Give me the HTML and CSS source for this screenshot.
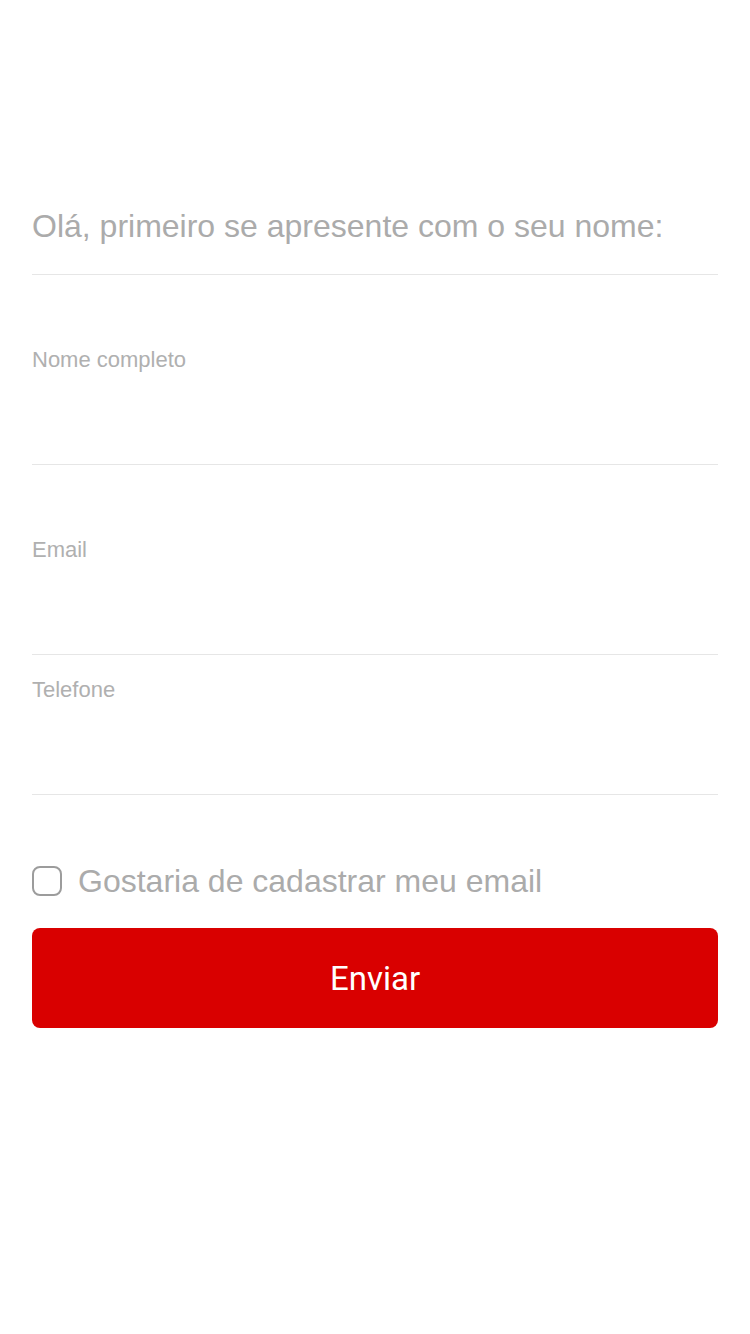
FILE: index.html
```html
<!DOCTYPE html>
<html lang="pt">
<head>
<meta charset="utf-8">
<title>Cadastro</title>
<link rel="stylesheet" href="styles.css">
</head>
<body>
<main class="page">
  <h1 class="intro">Olá, primeiro se apresente com o seu nome:</h1>
  <form class="form">
    <label class="field field--spaced">
      <span class="field-label">Nome completo</span>
      <input class="field-input" type="text">
    </label>
    <label class="field field--spaced">
      <span class="field-label">Email</span>
      <input class="field-input" type="email">
    </label>
    <label class="field">
      <span class="field-label">Telefone</span>
      <input class="field-input" type="tel">
    </label>
    <label class="check">
      <span class="check-box"></span>
      <span class="check-text">Gostaria de cadastrar meu email</span>
    </label>
    <button class="submit" type="button">Enviar</button>
  </form>
</main>
</body>
</html>
```

FILE: styles.css
```css
* { box-sizing: border-box; }
html, body { margin: 0; padding: 0; background: #fff; }
body { font-family: "Liberation Sans", Arial, sans-serif; }

.page {
  padding: 200px 32px 0;
}

.intro {
  margin: 0;
  font-size: 32px;
  font-weight: normal;
  line-height: 52px;
  color: #ababab;
  height: 75px;
  border-bottom: 1px solid #e6e6e6;
}

.form {
  display: flex;
  flex-direction: column;
}

.field {
  display: flex;
  flex-direction: column;
  height: 140px;
  padding-top: 22px;
  border-bottom: 1px solid #e6e6e6;
}

.field--spaced {
  height: 190px;
  padding-top: 72px;
}

.field-label {
  font-size: 22px;
  line-height: 26px;
  color: #b0b0b0;
}

.field-input {
  border: 0;
  outline: none;
  background: transparent;
  height: 60px;
  font: inherit;
  font-size: 28px;
  padding: 0;
}

.check {
  display: flex;
  align-items: center;
  gap: 16px;
  margin-top: 70px;
  height: 32px;
}

.check-box {
  width: 30px;
  height: 30px;
  border: 2px solid #9c9c9c;
  border-radius: 8px;
  flex: none;
}

.check-text {
  font-size: 32px;
  color: #ababab;
  line-height: 32px;
}

.submit {
  margin-top: 31px;
  height: 100px;
  border: 0;
  border-radius: 8px;
  background: #d90000;
  color: #fff;
  font-family: Roboto, "Liberation Sans", sans-serif;
  font-size: 33px;
  padding: 0;
}
```
